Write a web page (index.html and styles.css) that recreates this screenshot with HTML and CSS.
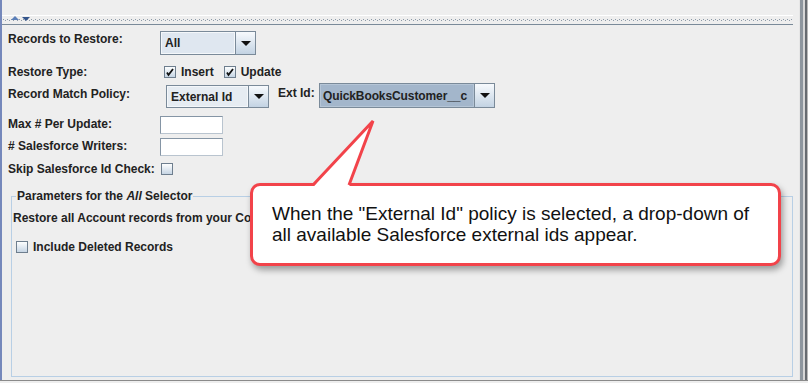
FILE: index.html
```html
<!DOCTYPE html>
<html lang="en">
<head>
  <meta charset="UTF-8" />
  <title>Restore Settings</title>
  <link rel="stylesheet" href="styles.css">
</head>
<body>
  <div class="window">
    <div class="panel">
      <div class="splitter">
        <span class="arr up"></span>
        <span class="arr down"></span>
      </div>

      <div class="row r1">
        <span class="lbl">Records to Restore:</span>
        <div class="combo combo-all">
          <span class="combo-val">All</span>
          <span class="combo-btn"><i class="tri"></i></span>
        </div>
      </div>

      <div class="row r2">
        <span class="lbl">Restore Type:</span>
        <span class="check-item">
          <span class="cb"><svg viewBox="0 0 10 10"><path d="M2 5.5 L3.5 8 L8 2" /></svg></span>Insert
        </span>
        <span class="check-item">
          <span class="cb"><svg viewBox="0 0 10 10"><path d="M2 5.5 L3.5 8 L8 2" /></svg></span>Update
        </span>
      </div>

      <div class="row r3">
        <span class="lbl">Record Match Policy:</span>
        <div class="combo combo-policy">
          <span class="combo-val">External Id</span>
          <span class="combo-btn"><i class="tri"></i></span>
        </div>
        <span class="ext-lbl">Ext Id:</span>
        <div class="combo combo-ext">
          <span class="combo-val">QuickBooksCustomer__c</span>
          <span class="combo-btn"><i class="tri"></i></span>
        </div>
      </div>

      <div class="row r4">
        <span class="lbl">Max # Per Update:</span>
        <span class="tf"></span>
      </div>

      <div class="row r5">
        <span class="lbl"># Salesforce Writers:</span>
        <span class="tf"></span>
      </div>

      <div class="row r6">
        <span class="lbl">Skip Salesforce Id Check:</span>
        <span class="cb"></span>
      </div>

      <fieldset class="params">
        <legend>Parameters for the <em>All</em> Selector</legend>
        <p class="params-text">Restore all Account records from your Company</p>
        <span class="check-item include">
          <span class="cb"></span>Include Deleted Records
        </span>
      </fieldset>
    </div>
    <div class="edge"></div>
  </div>

  <!-- annotation callout -->
  <svg class="callout-tail" width="90" height="80" viewBox="0 0 90 80">
    <polygon points="13,72 73,6 49,72" fill="#fff" />
    <polyline points="13,70 73,6 49,70" fill="none" stroke="#f2434a" stroke-width="3" stroke-linejoin="miter" />
  </svg>
  <div class="callout">
    When the "External Id" policy is selected, a drop-down of all available Salesforce external ids appear.
  </div>
</body>
</html>
```

FILE: styles.css
```css
* {
  box-sizing: border-box;
}

body {
  margin: 0;
  width: 808px;
  height: 383px;
  overflow: hidden;
  background: #eeeeee;
  font-family: 'Liberation Sans', Arial, sans-serif;
  font-size: 12px;
  font-weight: bold;
  color: #222;
  position: relative;
}

.window {
  display: flex;
  height: 381px;
  border-bottom: 1px solid #8a8a8a;
}

.panel {
  width: 799px;
  display: flex;
  flex-direction: column;
  border-left: 2px solid #7588bb;
}

/* split pane divider */
.splitter {
  margin-top: 15px;
  width: 791px;
  height: 10px;
  border-top: 1px solid #fff;
  border-bottom: 1px solid #7a8a99;
  position: relative;
  background-image:
    linear-gradient(90deg, #8d9aa8 1px, transparent 1px),
    linear-gradient(90deg, #8d9aa8 1px, transparent 1px);
  background-size: 4px 1px, 4px 1px;
  background-position: 1px 3px, 3px 4px;
  background-repeat: repeat-x;
}

.arr {
  position: absolute;
  width: 0;
  height: 0;
  border-left: 4px solid transparent;
  border-right: 4px solid transparent;
}

.arr.up {
  left: 9px;
  top: 0;
  border-bottom: 4px solid #5b7fb8;
}

.arr.down {
  left: 20px;
  top: 1px;
  border-top: 4px solid #34558c;
}

.row {
  display: flex;
  align-items: center;
  padding-left: 6px;
}

.lbl {
  width: 152px;
  flex: none;
  line-height: 14px;
}

.r1 {
  margin-top: 3px;
  height: 28px;
}

.r1 .lbl {
  align-self: flex-start;
  padding-top: 4px;
}

.r2 {
  margin-top: 6px;
  height: 19px;
}

.r2 .check-item {
  margin-left: 4px;
  margin-right: 6px;
}

.r3 {
  height: 29px;
}

.r3 .lbl {
  margin-bottom: 3px;
}

.r4 {
  margin-top: 5px;
  height: 20px;
}

.r5 {
  margin-top: 2px;
  height: 20px;
}

.r6 {
  margin-top: 2px;
  height: 20px;
}

.r6 .cb {
  margin-left: 1px;
}

.r4 .lbl,
.r5 .lbl {
  margin-bottom: 3px;
}

/* combo boxes */
.combo {
  display: flex;
  border: 1px solid #7a8a99;
  flex: none;
}

.combo-val {
  flex: 1;
  display: flex;
  align-items: center;
  padding-left: 3px;
  background: #dfe7f0;
  border: 1px solid #f4f7fa;
  white-space: nowrap;
  overflow: hidden;
}

.combo-btn {
  width: 20px;
  flex: none;
  display: flex;
  align-items: center;
  justify-content: center;
  border-left: 1px solid #7a8a99;
  background: linear-gradient(#f7fafd, #c3d3e3);
}

.tri {
  width: 0;
  height: 0;
  border-left: 5px solid transparent;
  border-right: 5px solid transparent;
  border-top: 5px solid #111;
}

.combo-all {
  width: 96px;
  height: 24px;
  margin-top: 2px;
}

.combo-policy {
  width: 103px;
  height: 23px;
  margin-left: 6px;
  margin-top: 2px;
}

.combo-policy .combo-val {
  background: #e6ecf2;
}

.ext-lbl {
  margin-left: 9px;
  margin-bottom: 5px;
  width: 41px;
}

.combo-ext {
  width: 176px;
  height: 25px;
}

.combo-ext .combo-val {
  background: #a3b6cb;
  border-color: #b5c5d6;
  padding-left: 2px;
  letter-spacing: -0.1px;
}

/* text fields */
.tf {
  width: 63px;
  height: 18px;
  background: #fff;
  border: 1px solid #8595a5;
  border-right-color: #b9c4cf;
  border-bottom-color: #b9c4cf;
}

/* check boxes */
.check-item {
  display: inline-flex;
  align-items: center;
  gap: 5px;
}

.cb {
  width: 12px;
  height: 12px;
  flex: none;
  display: inline-flex;
  border: 1px solid #6e7e8e;
  background: linear-gradient(#fdfefe, #c6d5e4);
}

.cb svg {
  width: 10px;
  height: 10px;
}

.cb path {
  fill: none;
  stroke: #111;
  stroke-width: 1.8;
}

/* parameters group */
.params {
  flex: 1;
  margin: 10px 6px 3px 9px;
  padding: 0 0 0 1px;
  border: 1px solid #b8cfe5;
  min-width: 0;
}

.params legend {
  margin-left: 3px;
  padding: 0 1px;
  line-height: 14px;
}

.params em {
  font-style: italic;
}

.params-text {
  margin: 8px 0 0 0;
  line-height: 14px;
  white-space: nowrap;
}

.include {
  margin-top: 15px;
  margin-left: 3px;
}

/* right window edge */
.edge {
  width: 9px;
  background: linear-gradient(90deg, #e6e6e6 0 1px, #8e969e 1px 4px, #d6d6d6 4px 6px, #676b70 6px 8px, #b9b9b9 8px);
}

/* annotation */
.callout {
  position: absolute;
  left: 250px;
  top: 183px;
  width: 531px;
  height: 83px;
  padding: 17px 12px 0 19px;
  background: #fff;
  border: 3px solid #f2434a;
  border-radius: 10px;
  box-shadow: 2px 4px 6px rgba(0, 0, 0, 0.35);
  font-weight: normal;
  font-size: 19px;
  line-height: 21px;
  color: #111;
}

.callout-tail {
  position: absolute;
  left: 300px;
  top: 115px;
  z-index: 2;
}
```
